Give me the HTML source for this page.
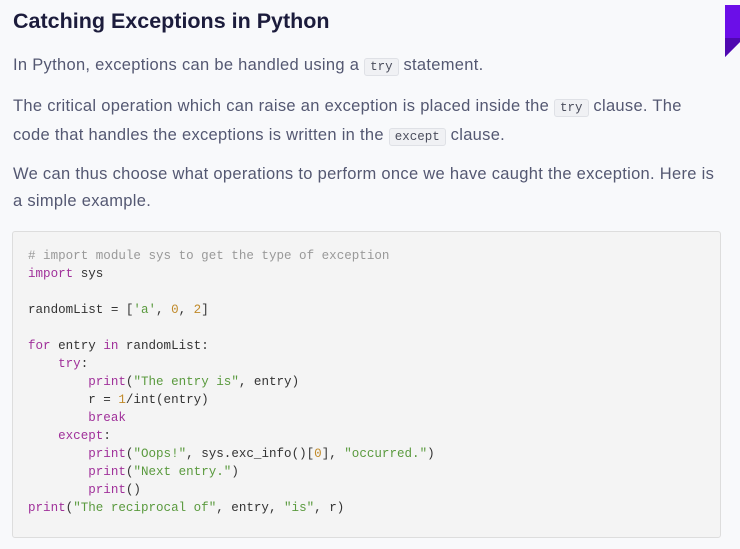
<!DOCTYPE html>
<html><head><style>
body{margin:0;background:#f8f9fb;width:740px;height:549px;overflow:hidden;position:relative;font-family:"Liberation Sans",sans-serif}
h2{position:absolute;left:13px;top:9px;margin:0;font-size:21.5px;font-weight:bold;color:#1c1c3c;letter-spacing:0px}
p{position:absolute;left:13px;margin:0;font-size:16.5px;line-height:27px;color:#545872;letter-spacing:0.3px;white-space:nowrap}
code{font-family:"Liberation Mono",monospace;font-size:12.5px;background:#f0f1f4;border:1px solid #dfe1e6;border-radius:3px;padding:1px 5px;color:#4a4d5c;letter-spacing:0}
.tab{position:absolute;left:725px;top:5px;width:15px;height:52px;background:#6b0ee8;clip-path:polygon(0 0,100% 0,100% 71%,0 100%)}
.tab2{position:absolute;left:725px;top:38px;width:15px;height:19px;background:#4f08b0;clip-path:polygon(0 0,100% 0,100% 21%,0 100%)}
pre{position:absolute;left:12px;top:231px;width:692px;height:290px;margin:0;padding:15px 0 0 15px;box-sizing:content-box;background:#f4f4f4;border:1px solid #ddd;border-radius:3px;font-family:"Liberation Mono",monospace;font-size:12.55px;line-height:18px;color:#333}
.c{color:#999}.k{color:#a0309a}.s{color:#5a9a3e}.n{color:#c08a2a}
</style></head><body>
<h2>Catching Exceptions in Python</h2>
<div class="tab"></div><div class="tab2"></div>
<p style="top:52px">In Python, exceptions can be handled using a <code>try</code> statement.</p>
<p style="top:93px">The critical operation which can raise an exception is placed inside the <code>try</code> clause. The<br>code that handles the exceptions is written in the <code>except</code> clause.</p>
<p style="top:161px">We can thus choose what operations to perform once we have caught the exception. Here is<br>a simple example.</p>
<pre><span class="c"># import module sys to get the type of exception</span>
<span class="k">import</span> sys

randomList = [<span class="s">'a'</span>, <span class="n">0</span>, <span class="n">2</span>]

<span class="k">for</span> entry <span class="k">in</span> randomList:
    <span class="k">try</span>:
        <span class="k">print</span>(<span class="s">"The entry is"</span>, entry)
        r = <span class="n">1</span>/int(entry)
        <span class="k">break</span>
    <span class="k">except</span>:
        <span class="k">print</span>(<span class="s">"Oops!"</span>, sys.exc_info()[<span class="n">0</span>], <span class="s">"occurred."</span>)
        <span class="k">print</span>(<span class="s">"Next entry."</span>)
        <span class="k">print</span>()
<span class="k">print</span>(<span class="s">"The reciprocal of"</span>, entry, <span class="s">"is"</span>, r)</pre>
</body></html>
